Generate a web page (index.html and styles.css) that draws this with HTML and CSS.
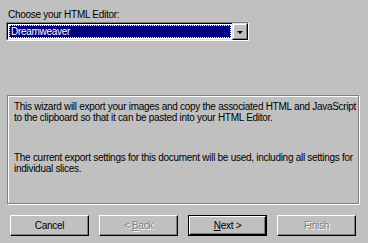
FILE: index.html
```html
<!DOCTYPE html>
<html>
<head>
<meta charset="utf-8">
<link rel="stylesheet" href="styles.css">
</head>
<body>
<div class="dialog">
  <div class="label">Choose your HTML Editor:</div>
  <div class="combo">
    <div class="field"><span class="sel">Dreamweaver</span></div>
    <div class="drop"><span class="arrow"></span></div>
  </div>
  <div class="group">
    <p>This wizard will export your images and copy the associated HTML and JavaScript<br>to the clipboard so that it can be pasted into your HTML Editor.</p>
    <p class="second">The current export settings for this document will be used, including all settings for<br>individual slices.</p>
  </div>
  <div class="buttons">
    <div class="btn">Cancel</div>
    <div class="btn disabled">&lt;&nbsp;<u>B</u>ack</div>
    <div class="btn default"><span class="inner"><u>N</u>ext&nbsp;&gt;</span></div>
    <div class="btn disabled">Finish</div>
  </div>
</div>
</body>
</html>
```
FILE: styles.css
```css
html, body {
  margin: 0;
  padding: 0;
  background: #c0c0c0;
}
.dialog {
  width: 368px;
  height: 243px;
  font-family: "Liberation Sans", Arial, sans-serif;
  font-size: 10px;
  letter-spacing: -0.28px;
  line-height: 11px;
  color: #000;
  display: flex;
  flex-direction: column;
}
.label {
  margin: 9px 0 0 8px;
  height: 11px;
}
.combo {
  margin: 2px 0 0 6px;
  width: 243px;
  height: 19px;
  box-sizing: border-box;
  border-top: 1px solid #808080;
  border-left: 1px solid #808080;
  border-right: 1px solid #fff;
  border-bottom: 1px solid #fff;
  display: flex;
}
.combo .field {
  flex: 1;
  border-top: 1px solid #000;
  border-left: 1px solid #000;
  border-bottom: 1px solid #dfdfdf;
  background: #fff;
  padding: 1px;
  display: flex;
}
.combo .sel {
  flex: 1;
  background: #000080;
  color: #fff;
  outline: 1px dotted #fff;
  outline-offset: -1px;
  padding-left: 2px;
  line-height: 13px;
}
.combo .drop {
  width: 16px;
  box-sizing: border-box;
  background: #c0c0c0;
  border-top: 1px solid #dfdfdf;
  border-left: 1px solid #dfdfdf;
  border-right: 1px solid #000;
  border-bottom: 1px solid #000;
  box-shadow: inset -1px -1px 0 #808080, inset 1px 1px 0 #fff;
  display: flex;
  align-items: center;
  justify-content: center;
}
.arrow {
  width: 0;
  height: 0;
  border-left: 3px solid transparent;
  border-right: 3px solid transparent;
  border-top: 3px solid #000;
  margin-top: 1px;
}
.group {
  margin: 54px 0 0 7px;
  width: 352px;
  height: 109px;
  box-sizing: border-box;
  border: 1px solid #808080;
  box-shadow: 1px 1px 0 #fff, inset 1px 1px 0 #fff;
  padding: 5px 0 0 6px;
  overflow: hidden;
}
.group p {
  margin: 0;
  line-height: 11px;
  white-space: nowrap;
}
.group p.second {
  margin-top: 29px;
}
.buttons {
  display: flex;
  gap: 10px;
  margin: 11px 0 0 10px;
}
.btn {
  width: 79px;
  height: 21px;
  box-sizing: border-box;
  background: #c0c0c0;
  border-top: 1px solid #fff;
  border-left: 1px solid #fff;
  border-right: 1px solid #000;
  border-bottom: 1px solid #000;
  box-shadow: inset -1px -1px 0 #808080;
  display: flex;
  align-items: center;
  justify-content: center;
}
.btn.disabled {
  color: #808080;
  text-shadow: 1px 1px 0 #fff;
}
.btn.default {
  border: 1px solid #000;
  box-shadow: none;
}
.btn.default .inner {
  flex: 1;
  align-self: stretch;
  display: flex;
  align-items: center;
  justify-content: center;
  border-top: 1px solid #fff;
  border-left: 1px solid #fff;
  border-right: 1px solid #000;
  border-bottom: 1px solid #000;
  box-shadow: inset -1px -1px 0 #808080;
}
```
